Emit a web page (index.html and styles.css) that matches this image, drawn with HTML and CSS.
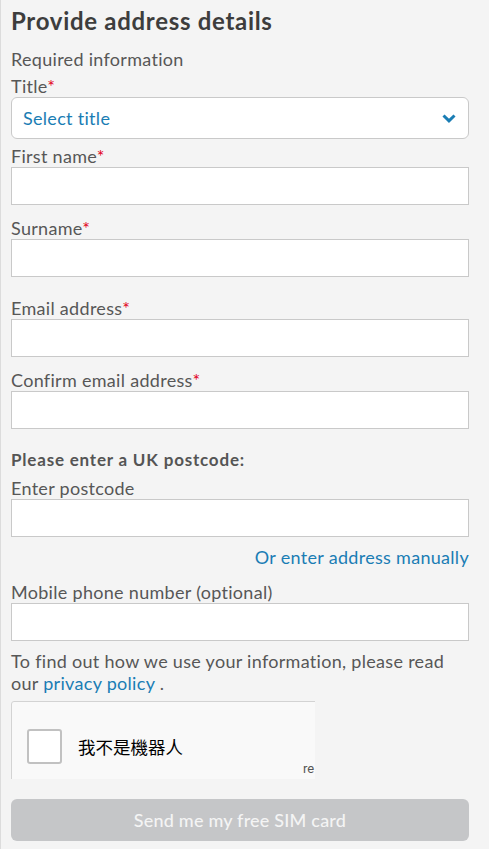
FILE: index.html
```html
<!DOCTYPE html>
<html lang="en">
<head>
<meta charset="utf-8">
<title>Provide address details</title>
<link rel="stylesheet" href="styles.css">
</head>
<body>
<div class="page">
  <h1 class="title">Provide address details</h1>
  <p class="required">Required information</p>

  <label class="label">Title<span class="star">*</span></label>
  <div class="select">
    <span class="select-text">Select title</span>
    <svg class="chevron" width="14" height="9" viewBox="0 0 14 9"><path d="M1.5 1.5 L7 6.8 L12.5 1.5" fill="none" stroke="#1a7db4" stroke-width="3"/></svg>
  </div>

  <div class="field f-first">
    <label class="label">First name<span class="star">*</span></label>
    <div class="input"></div>
  </div>
  <div class="field f-surname">
    <label class="label">Surname<span class="star">*</span></label>
    <div class="input"></div>
  </div>
  <div class="field f-email">
    <label class="label">Email address<span class="star">*</span></label>
    <div class="input"></div>
  </div>
  <div class="field f-confirm">
    <label class="label">Confirm email address<span class="star">*</span></label>
    <div class="input"></div>
  </div>

  <p class="postcode-head">Please enter a UK postcode:</p>
  <div class="field f-postcode">
    <label class="label">Enter postcode</label>
    <div class="input"></div>
  </div>
  <div class="manual"><a class="link">Or enter address manually</a></div>

  <div class="field f-mobile">
    <label class="label">Mobile phone number (optional)</label>
    <div class="input"></div>
  </div>

  <p class="info"><span class="info-line">To find out how we use your information, please read</span><br><span class="info-line">our <a class="link">privacy policy</a> .</span></p>

  <div class="captcha">
    <div class="captcha-inner">
      <div class="cb"></div>
      <span class="cb-text">我不是機器人</span>
      <span class="re">re</span>
    </div>
  </div>

  <button class="submit">Send me my free SIM card</button>
</div>
</body>
</html>
```
FILE: styles.css
```css
html, body {
  margin: 0;
  padding: 0;
  background: #f4f4f4;
}
body {
  font-family: Lato, "Noto Sans", sans-serif;
  color: #575757;
  letter-spacing: 0.3px;
}
.page {
  border-left: 1px solid #dcdcdc;
  padding: 0 20px 20px 10px;
  min-height: 849px;
  box-sizing: border-box;
}
.title {
  margin: 0;
  padding-top: 6px;
  font-size: 24px;
  line-height: 30px;
  font-weight: 700;
  letter-spacing: 0.7px;
  color: #3d3d3d;
}
.required {
  margin: 12px 0 0;
  font-size: 18px;
  line-height: 22px;
}
.label {
  display: block;
  font-size: 18px;
  line-height: 22px;
  height: 22px;
  margin-top: 5px;
}
.star { color: #e2001a; }
.select {
  height: 42px;
  box-sizing: border-box;
  background: #fff;
  border: 1px solid #c9c9c9;
  border-radius: 6px;
  display: flex;
  align-items: center;
  justify-content: space-between;
  padding: 0 12px 0 11px;
}
.select-text {
  font-size: 18px;
  color: #1a7db4;
}
.chevron { display: block; }
.input {
  height: 38px;
  box-sizing: border-box;
  background: #fff;
  border: 1px solid #c9c9c9;
}
.field .label { margin-top: 0; }
.f-first { margin-top: 6px; }
.f-surname { margin-top: 12px; }
.f-email { margin-top: 20px; }
.f-confirm { margin-top: 12px; }
.postcode-head {
  margin: 20px 0 0;
  font-size: 17px;
  line-height: 22px;
  font-weight: 700;
  letter-spacing: 0.8px;
  color: #555;
}
.f-postcode { margin-top: 6px; }
.manual {
  text-align: right;
  font-size: 18px;
  line-height: 22px;
  margin-top: 9px;
}
.link { color: #1a7db4; text-decoration: none; }
.f-mobile { margin-top: 13px; }
.info {
  margin: 9px 0 0;
  font-size: 18px;
  line-height: 22px;
}
.captcha {
  margin-top: 7px;
  width: 304px;
  height: 78px;
  overflow: hidden;
}
.captcha-inner {
  width: 320px;
  height: 98px;
  box-sizing: border-box;
  background: #f9f9f9;
  border: 1px solid #d3d3d3;
  border-radius: 3px;
  display: flex;
  align-items: center;
  position: relative;
  padding-left: 15px;
  padding-bottom: 8px;
}
.cb {
  width: 35px;
  height: 35px;
  box-sizing: border-box;
  background: #fff;
  border: 2px solid #c1c1c1;
  border-radius: 3px;
}
.cb-text {
  margin-left: 16px;
  font-family: "Noto Sans CJK TC", "Noto Sans CJK SC", sans-serif;
  font-size: 17.5px;
  letter-spacing: 0;
  color: #000;
}
.re {
  position: absolute;
  left: 291px;
  top: 60px;
  font-family: Roboto, sans-serif;
  font-size: 13px;
  line-height: 14px;
  letter-spacing: 0;
  color: #555;
}
.submit {
  display: block;
  width: 100%;
  margin-top: 20px;
  height: 42px;
  border: none;
  border-radius: 6px;
  background: #c5c6c8;
  color: #f4f4f4;
  font-family: Lato, sans-serif;
  font-size: 18px;
  font-weight: 500;
  letter-spacing: 0.2px;
}
```
